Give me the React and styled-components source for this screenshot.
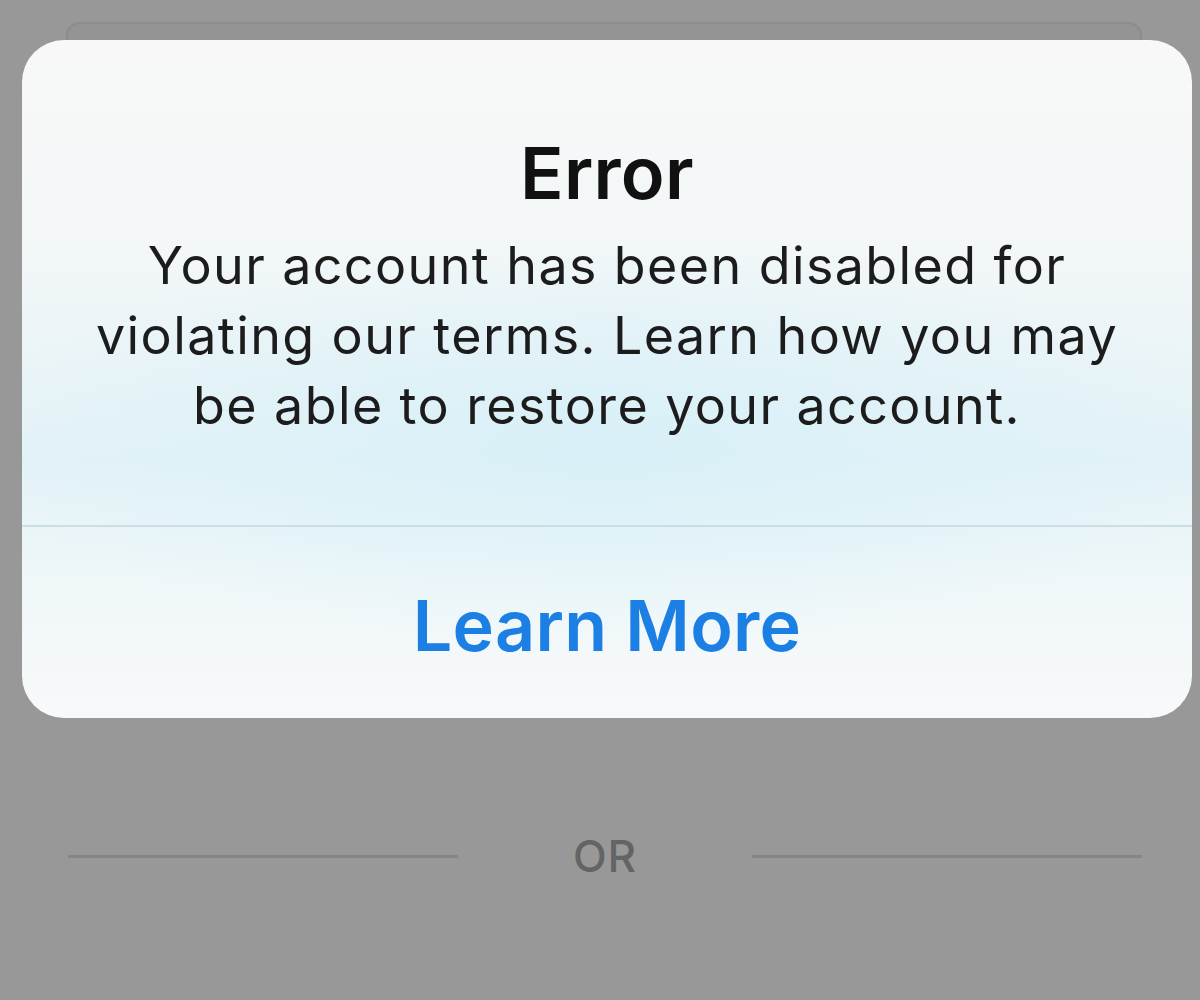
import styled, { createGlobalStyle } from "styled-components";

const GlobalStyle = createGlobalStyle`
  html, body {
    margin: 0;
    padding: 0;
    background: #989898;
  }
  body {
    font-family: Inter, "Noto Sans", sans-serif;
  }
`;

const Screen = styled.div`
  position: relative;
  width: 1200px;
  height: 1000px;
  overflow: hidden;
  background: #989898;
  display: flex;
  flex-direction: column;
`;

const Field = styled.div`
  margin: 22px 58px 0 66px;
  height: 120px;
  border: 2px solid #8c8c8c;
  border-radius: 14px;
  background: #949494;
`;

const Divider = styled.div`
  margin-top: 683px;
  padding: 0 58px 0 68px;
  display: flex;
  align-items: center;
`;

const Rule = styled.div`
  flex: 1;
  height: 3px;
  background: #868686;
`;

const OrLabel = styled.span`
  width: 294px;
  text-align: center;
  font-size: 44px;
  font-weight: 500;
  color: #646464;
  letter-spacing: 1px;
`;

const Alert = styled.div`
  position: absolute;
  top: 40px;
  left: 22px;
  width: 1170px;
  height: 678px;
  border-radius: 42px;
  overflow: hidden;
  display: flex;
  flex-direction: column;
  background:
    radial-gradient(ellipse 640px 200px at 50% 400px, rgba(216, 240, 248, 0.95), rgba(216, 240, 248, 0) 100%),
    linear-gradient(180deg, #f8f8f8 0%, #f3f7f8 30%, #e3f2f7 62%, #eff7f9 80%, #f8f9fa 100%);
`;

const Body = styled.div`
  height: 487px;
  box-sizing: border-box;
  padding-top: 90px;
  display: flex;
  flex-direction: column;
  align-items: center;
  border-bottom: 2px solid #c9dee5;
`;

const Title = styled.h1`
  margin: 0;
  font-size: 72px;
  line-height: 86px;
  font-weight: 600;
  color: #111;
  letter-spacing: 0.3px;
`;

const Message = styled.p`
  margin: 15px 0 0;
  font-size: 52px;
  line-height: 70px;
  font-weight: 400;
  color: #1c1c1c;
  text-align: center;
  letter-spacing: 1.4px;
`;

const ActionButton = styled.button`
  flex: 1;
  border: none;
  background: transparent;
  font-family: inherit;
  font-size: 70px;
  font-weight: 600;
  color: #1b7fe3;
  padding: 6px 0 0;
  letter-spacing: 0.3px;
  cursor: pointer;
`;

export default function App() {
  return (
    <>
      <GlobalStyle />
      <Screen>
        <Field />
        <Divider>
          <Rule />
          <OrLabel>OR</OrLabel>
          <Rule />
        </Divider>
        <Alert>
          <Body>
            <Title>Error</Title>
            <Message>
              Your account has been disabled for
              <br />
              violating our terms. Learn how you may
              <br />
              be able to restore your account.
            </Message>
          </Body>
          <ActionButton>Learn More</ActionButton>
        </Alert>
      </Screen>
    </>
  );
}
